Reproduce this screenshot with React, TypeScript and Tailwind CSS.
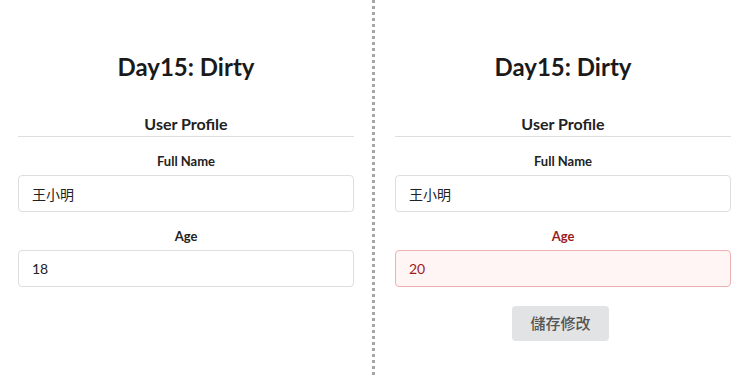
import { useState } from "react"

const font = "font-['Lato','Noto_Sans_CJK_TC',sans-serif]"

function Field({ label, value, dirty, first }: { label: string; value: string; dirty?: boolean; first?: boolean }) {
    return (
        <div className={`${first ? "mt-[14px]" : "mt-[14px]"} flex flex-col`}>
            <label
                className={`text-center text-[13px] font-bold leading-5 ${dirty ? "text-[#9b1c1c]" : "text-[#222]"}`}
            >
                {label}
            </label>
            <input
                readOnly
                value={value}
                className={`mt-[4px] h-[37px] w-full rounded-[4px] border px-[13px] text-[14px] outline-none ${font} ${
                    dirty
                        ? "border-[#eeb0b0] bg-[#fff5f5] text-[#9b1c1c]"
                        : "border-[#dedede] bg-white text-[#222]"
                }`}
            />
        </div>
    )
}

function Panel({ age, original, className }: { age: string; original: string; className: string }) {
    const [name] = useState("王小明")
    const dirty = age !== original

    return (
        <div className={`flex flex-col ${className}`}>
            <h1 className="mt-[52px] text-center text-[24px] font-bold leading-[29px] text-[#1a1a1a]">
                Day15: Dirty
            </h1>
            <h2 className="mt-[31px] border-b border-[#dfdfdf] text-center text-[16px] font-bold leading-6 text-[#222]">
                User Profile
            </h2>
            <Field label="Full Name" value={name} first />
            <Field label="Age" value={age} dirty={dirty} />
            {dirty && (
                <div className="mt-[19px] flex justify-center pr-[5px]">
                    <button className="h-[35px] w-[97px] rounded-[4px] bg-[#e2e3e5] text-[15px] font-medium text-[#555]">
                        儲存修改
                    </button>
                </div>
            )}
        </div>
    )
}

export default function App() {
    return (
        <div className={`flex h-[375px] w-[750px] bg-white ${font}`}>
            <Panel
                age="18"
                original="18"
                className="w-[375px] border-r-[3px] border-dotted border-[#a6a6a6] px-[18px]"
            />
            <Panel age="20" original="18" className="flex-1 pl-[20px] pr-[19px]" />
        </div>
    )
}
